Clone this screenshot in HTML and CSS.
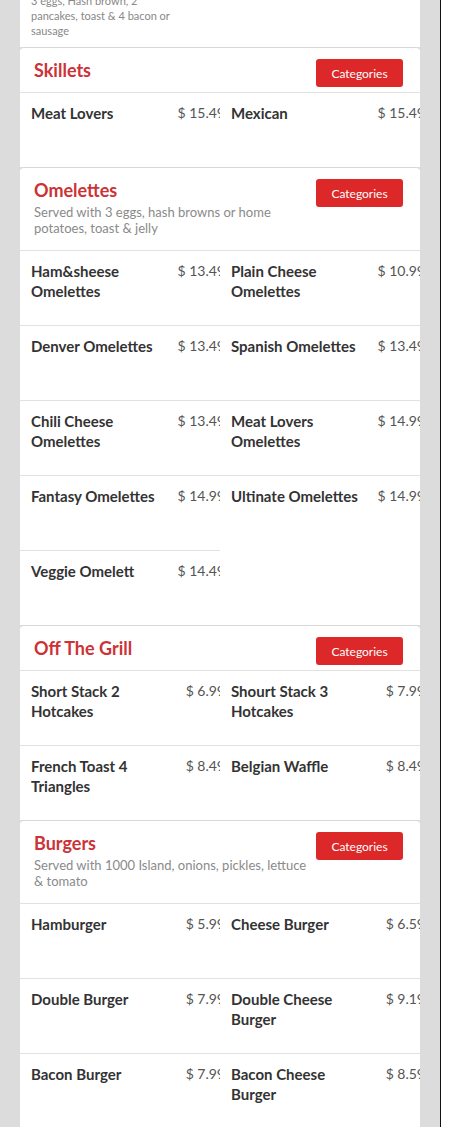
FILE: index.html
```html
<!DOCTYPE html>
<html lang="en">
<head>
<meta charset="utf-8">
<title>Menu</title>
<link rel="stylesheet" href="styles.css">
</head>
<body>
<div class="frame">
  <div class="menu">

    <section class="card card-partial">
      <div class="items">
        <div class="item">
          <div class="item-row">
            <div class="item-info">
              <div class="item-name">Big Breakfast</div>
              <div class="item-desc">3 eggs, Hash brown, 2 pancakes, toast &amp; 4 bacon or sausage</div>
            </div>
            <div class="item-price">$ 13.99</div>
          </div>
        </div>
      </div>
    </section>

    <section class="card">
      <div class="card-head">
        <div class="head-text">
          <h2 class="card-title">Skillets</h2>
        </div>
        <button class="cat-btn">Categories</button>
      </div>
      <div class="items">
        <div class="item"><div class="item-row"><div class="item-info"><div class="item-name">Meat Lovers</div></div><div class="item-price">$ 15.49</div></div></div>
        <div class="item"><div class="item-row"><div class="item-info"><div class="item-name">Mexican</div></div><div class="item-price">$ 15.49</div></div></div>
      </div>
    </section>

    <section class="card">
      <div class="card-head">
        <div class="head-text">
          <h2 class="card-title">Omelettes</h2>
          <p class="card-desc">Served with 3 eggs, hash browns or home potatoes, toast &amp; jelly</p>
        </div>
        <button class="cat-btn">Categories</button>
      </div>
      <div class="items">
        <div class="item"><div class="item-row"><div class="item-info"><div class="item-name">Ham&amp;sheese Omelettes</div></div><div class="item-price">$ 13.49</div></div></div>
        <div class="item"><div class="item-row"><div class="item-info"><div class="item-name">Plain Cheese Omelettes</div></div><div class="item-price">$ 10.99</div></div></div>
        <div class="item"><div class="item-row"><div class="item-info"><div class="item-name">Denver Omelettes</div></div><div class="item-price">$ 13.49</div></div></div>
        <div class="item"><div class="item-row"><div class="item-info"><div class="item-name">Spanish Omelettes</div></div><div class="item-price">$ 13.49</div></div></div>
        <div class="item"><div class="item-row"><div class="item-info"><div class="item-name">Chili Cheese Omelettes</div></div><div class="item-price">$ 13.49</div></div></div>
        <div class="item"><div class="item-row"><div class="item-info"><div class="item-name">Meat Lovers Omelettes</div></div><div class="item-price">$ 14.99</div></div></div>
        <div class="item"><div class="item-row"><div class="item-info"><div class="item-name">Fantasy Omelettes</div></div><div class="item-price">$ 14.99</div></div></div>
        <div class="item"><div class="item-row"><div class="item-info"><div class="item-name">Ultinate Omelettes</div></div><div class="item-price">$ 14.99</div></div></div>
        <div class="item"><div class="item-row"><div class="item-info"><div class="item-name">Veggie Omelett</div></div><div class="item-price">$ 14.49</div></div></div>
      </div>
    </section>

    <section class="card">
      <div class="card-head">
        <div class="head-text">
          <h2 class="card-title">Off The Grill</h2>
        </div>
        <button class="cat-btn">Categories</button>
      </div>
      <div class="items">
        <div class="item"><div class="item-row"><div class="item-info"><div class="item-name">Short Stack 2 Hotcakes</div></div><div class="item-price">$ 6.99</div></div></div>
        <div class="item"><div class="item-row"><div class="item-info"><div class="item-name">Shourt Stack 3 Hotcakes</div></div><div class="item-price">$ 7.99</div></div></div>
        <div class="item"><div class="item-row"><div class="item-info"><div class="item-name">French Toast 4 Triangles</div></div><div class="item-price">$ 8.49</div></div></div>
        <div class="item"><div class="item-row"><div class="item-info"><div class="item-name">Belgian Waffle</div></div><div class="item-price">$ 8.49</div></div></div>
      </div>
    </section>

    <section class="card">
      <div class="card-head">
        <div class="head-text">
          <h2 class="card-title">Burgers</h2>
          <p class="card-desc">Served with 1000 Island, onions, pickles, lettuce &amp; tomato</p>
        </div>
        <button class="cat-btn">Categories</button>
      </div>
      <div class="items">
        <div class="item"><div class="item-row"><div class="item-info"><div class="item-name">Hamburger</div></div><div class="item-price">$ 5.99</div></div></div>
        <div class="item"><div class="item-row"><div class="item-info"><div class="item-name">Cheese Burger</div></div><div class="item-price">$ 6.59</div></div></div>
        <div class="item"><div class="item-row"><div class="item-info"><div class="item-name">Double Burger</div></div><div class="item-price">$ 7.99</div></div></div>
        <div class="item"><div class="item-row"><div class="item-info"><div class="item-name">Double Cheese Burger</div></div><div class="item-price">$ 9.19</div></div></div>
        <div class="item"><div class="item-row"><div class="item-info"><div class="item-name">Bacon Burger</div></div><div class="item-price">$ 7.99</div></div></div>
        <div class="item"><div class="item-row"><div class="item-info"><div class="item-name">Bacon Cheese Burger</div></div><div class="item-price">$ 8.59</div></div></div>
      </div>
    </section>

  </div>
</div>
</body>
</html>
```

FILE: styles.css
```css
html {
  background: #ffffff;
}

body {
  margin: 0;
  font-family: Lato, "Open Sans", "Liberation Sans", sans-serif;
}

.frame {
  width: 440px;
  height: 1127px;
  background: #dcdcdc;
  border-right: 1px solid #111111;
  overflow: hidden;
}

.menu {
  width: 400px;
  margin-left: 20px;
}

.card {
  background: #ffffff;
  border-top: 1px solid #d8d8d8;
  border-radius: 4px 4px 0 0;
}

.card-partial {
  margin-top: -39px;
}

.card-head {
  display: flex;
  align-items: flex-start;
  padding: 11px 17px 5px 14px;
}

.head-text {
  flex: 1;
  margin-right: 4px;
}

.card-title {
  margin: 0;
  font-size: 18px;
  line-height: 22px;
  font-weight: 700;
  color: #cc3236;
}

.card-desc {
  margin: 3px 0 9px;
  font-size: 13px;
  line-height: 16px;
  color: #8a8a8a;
}

.cat-btn {
  flex: none;
  width: 87px;
  height: 28px;
  padding: 0;
  border: 0;
  border-radius: 3px;
  background: #dc2828;
  color: #ffffff;
  font-family: Lato, "Open Sans", sans-serif;
  font-size: 12px;
}

.items {
  display: grid;
  grid-template-columns: 200px 200px;
}

.item {
  box-sizing: border-box;
  min-height: 75px;
  border-top: 1px solid #e2e2e2;
  padding: 10px 0 9px 11px;
  overflow: hidden;
}

.item-row {
  display: flex;
  width: 194px;
}

.item-info {
  flex: none;
  width: 140px;
}

.item-name {
  font-size: 15px;
  line-height: 20px;
  font-weight: 700;
  color: #333333;
}

.item-desc {
  font-size: 11px;
  line-height: 15px;
  color: #888888;
}

.item-price {
  flex: 1;
  text-align: right;
  white-space: nowrap;
  font-size: 14px;
  line-height: 20px;
  color: #555555;
}
```
